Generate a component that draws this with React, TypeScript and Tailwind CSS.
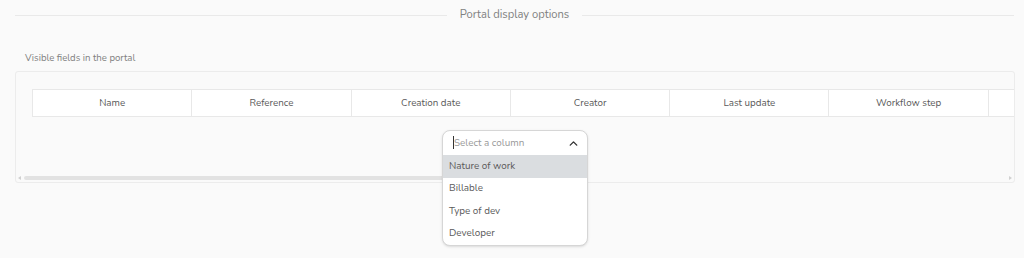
import { ChevronUp } from 'lucide-react'

const columnas = ['Name', 'Reference', 'Creation date', 'Creator', 'Last update', 'Workflow step', '']
const opciones = ['Nature of work', 'Billable', 'Type of dev', 'Developer']

export default function App() {
  return (
    <div className="relative h-[258px] w-full overflow-hidden bg-[#fafafa] font-['Nunito','Lato',sans-serif] text-[#666]">

      {/* Header */}
      <div className="flex h-[30px] items-center pl-[15px] pr-[10px]">
        <div className="h-px flex-1 bg-[#e9e9e9]" />
        <span className="px-[13px] text-[11.2px] text-[#808080]">Portal display options</span>
        <div className="h-px flex-1 bg-[#e9e9e9]" />
      </div>

      {/* Label */}
      <p className="mt-[21px] pl-[25px] text-[9.6px] leading-[14px] text-[#808080]">Visible fields in the portal</p>

      {/* Panel */}
      <div className="ml-[15px] mt-[6px] h-[112px] w-[1000px] overflow-hidden rounded-[3px] border border-[#ececec] bg-[#fafafa]">
        <div className="overflow-hidden pl-[16px] pt-[17px]">
          <div className="flex w-[1120px] border border-[#e8e8e8] bg-white">
            {columnas.map((col, idx) => (
              <div
                key={idx}
                className={`flex h-[26px] w-[159.3px] shrink-0 items-center justify-center text-[9.8px] text-[#5a5a5a] ${
                  idx < columnas.length - 1 ? 'border-r border-[#e8e8e8]' : ''
                }`}
              >
                {col}
              </div>
            ))}
          </div>
        </div>

        {/* Scrollbar */}
        <div className="mt-[58px] flex h-[5px] items-center px-[2px]">
          <span className="mr-[3px] h-0 w-0 border-y-[2px] border-r-[3px] border-y-transparent border-r-[#d0d0d0]" />
          <div className="h-[4px] w-[560px] rounded-full bg-[#e2e2e2]" />
          <div className="flex-1" />
          <span className="ml-[3px] h-0 w-0 border-y-[2px] border-l-[3px] border-y-transparent border-l-[#d0d0d0]" />
        </div>
      </div>

      {/* Dropdown abierto */}
      <div className="absolute left-[442px] top-[130px] w-[146px] overflow-hidden rounded-[8px] border border-[#d6d6d6] bg-white shadow-sm">
        <div className="flex h-[24px] items-center justify-between pl-[10px] pr-[7px]">
          <div className="flex items-center">
            <span className="h-[13px] w-px bg-[#333]" />
            <span className="text-[9.9px] text-[#999]">Select a column</span>
          </div>
          <ChevronUp size={13} strokeWidth={2.6} className="text-[#333]" />
        </div>
        {opciones.map((op, idx) => (
          <div
            key={op}
            className={`flex h-[22.5px] items-center px-[6px] text-[9.9px] text-[#5a5a5a] ${
              idx === 0 ? 'bg-[#dadde0]' : ''
            }`}
          >
            {op}
          </div>
        ))}
      </div>

    </div>
  )
}
